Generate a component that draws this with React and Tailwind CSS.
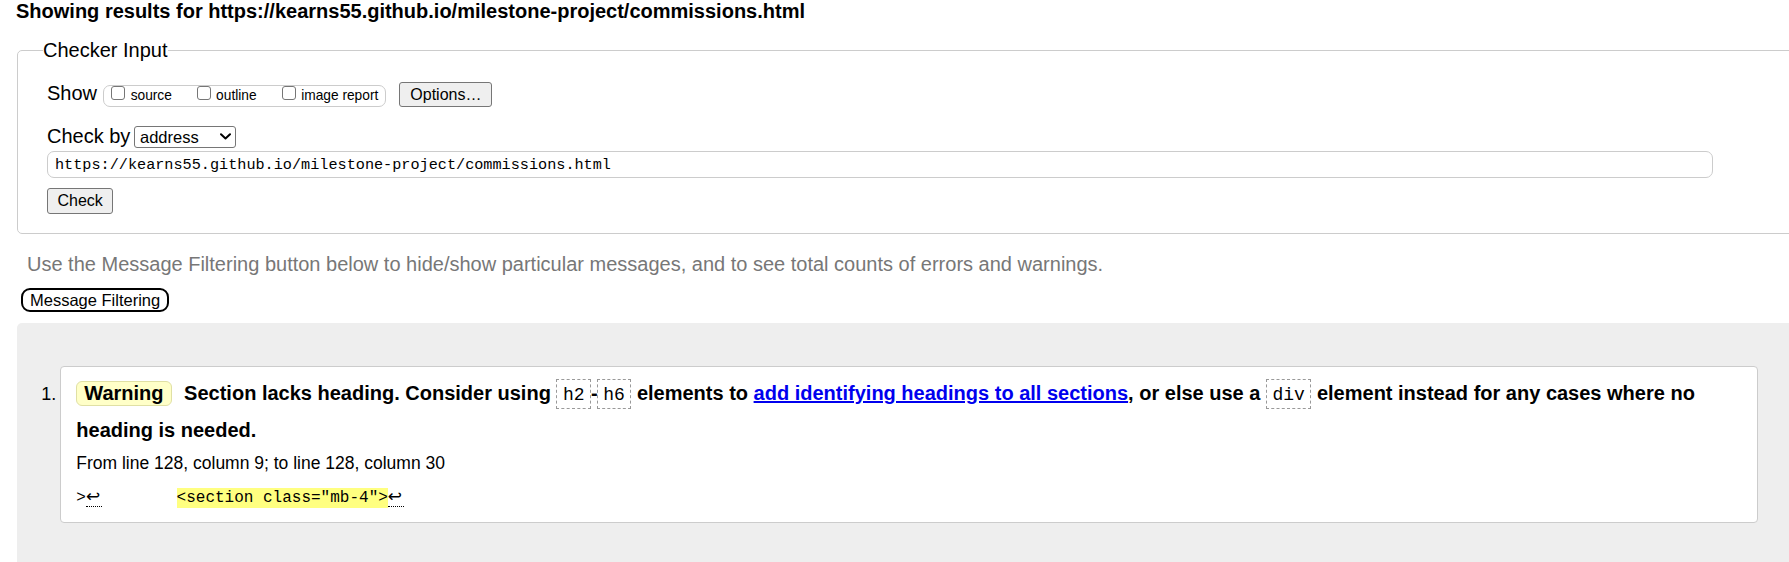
export default function App() {
  return (
    <div className="h-[562px] w-full overflow-hidden bg-white pl-4 text-black font-['Liberation_Sans',Arial,sans-serif]">
      <h2 className="text-[20px] font-bold leading-[23px]">
        Showing results for https://kearns55.github.io/milestone-project/commissions.html
      </h2>

      <fieldset className="ml-px mr-[-60px] mt-[16px] rounded-[5px] border border-[#cccccc] pb-[19px] pl-[29px]">
        <legend className="-ml-[4px] text-[20px] leading-[23px]">Checker Input</legend>

        <div className="mt-[20.3px] flex items-baseline">
          <span className="text-[20px] leading-[23px]">Show</span>
          <div className="ml-[5.6px] flex items-baseline rounded-[7px] border border-[#cccccc] pl-[7.5px] pr-[7px] text-[13.75px] leading-[20px]">
            <span className="h-[14px] w-[14px] rounded-[3px] border border-[#767676] bg-white" />
            <span className="ml-[5.5px] mr-[24.7px]">source</span>
            <span className="h-[14px] w-[14px] rounded-[3px] border border-[#767676] bg-white" />
            <span className="ml-[5.5px] mr-[25px]">outline</span>
            <span className="h-[14px] w-[14px] rounded-[3px] border border-[#767676] bg-white" />
            <span className="ml-[5.5px]">image report</span>
          </div>
          <button className="ml-[13px] rounded-[3px] border border-[#767676] bg-[#efefef] px-[10px] py-[2px] text-[16px] leading-[19px]">
            Options…
          </button>
        </div>

        <div className="mt-[17.3px] flex items-baseline">
          <span className="text-[20px] leading-[23px]">Check by</span>
          <div className="ml-[4px] flex h-[22px] w-[102px] justify-between rounded-[3px] border border-[#767676] bg-white pl-[4.6px] pr-[4px] text-[16.5px] leading-[20px]">
            <span>address</span>
            <svg className="self-center" width="11" height="7" viewBox="0 0 11 7" fill="none">
              <path d="M1 1.2l4.5 4.3 4.5-4.3" stroke="#000" strokeWidth="2" strokeLinecap="round" strokeLinejoin="round" />
            </svg>
          </div>
        </div>

        <div className="mt-[3.2px] h-[27px] w-[1666px] rounded-[7px] border border-[#cccccc] bg-white pl-[7px] pt-[1px] font-['Liberation_Mono',monospace] text-[15.2px] leading-[24px]">
          https://kearns55.github.io/milestone-project/commissions.html
        </div>

        <button className="mt-[10.5px] block rounded-[3px] border border-[#767676] bg-[#efefef] px-[9.5px] py-[2px] text-[16px] leading-[20px]">
          Check
        </button>
      </fieldset>

      <p className="ml-[11px] mt-[19px] text-[20px] leading-[23px] text-[#777777]">
        Use the Message Filtering button below to hide/show particular messages, and to see total counts of errors and warnings.
      </p>

      <button className="ml-[5.3px] mt-[11.6px] block h-[24px] rounded-[9px] border-2 border-black bg-white px-[6.7px] text-[16.5px] leading-[20px]">
        Message Filtering
      </button>

      <div className="ml-px mr-[-60px] mt-[10.7px] flex items-start rounded-tl-[5px] bg-[#eeeeee] pb-[60px] pl-[24.3px] pr-[91px] pt-[43.7px]">
        <span className="mt-[17.3px] w-[19px] shrink-0 text-[18px] leading-[21px]">1.</span>
        <div className="flex-1 rounded-[4px] border border-[#cccccc] bg-white pb-[14.3px] pl-[15px] pr-[16px] pt-[7.6px]">
          <p className="text-[20px] font-bold leading-[37px]">
            <span className="mr-[7px] inline-block rounded-[6px] border border-[#e0e0a4] bg-[#ffffc8] px-[7px] leading-[23px]">
              Warning
            </span>{" "}
            Section lacks heading. Consider using{" "}
            <code className="inline-block border border-dashed border-[#999999] px-[5.5px] pb-[2px] pt-[4px] font-['Liberation_Mono',monospace] text-[18px] font-normal leading-[22px]">
              h2
            </code>
            <span className="tracking-[-1px]">-</span>
            <code className="inline-block border border-dashed border-[#999999] px-[5.5px] pb-[2px] pt-[4px] font-['Liberation_Mono',monospace] text-[18px] font-normal leading-[22px]">
              h6
            </code>{" "}
            elements to{" "}
            <a href="#" className="text-[#0000ee] underline">
              add identifying headings to all sections
            </a>
            , or else use a{" "}
            <code className="inline-block border border-dashed border-[#999999] px-[5.5px] pb-[2px] pt-[4px] font-['Liberation_Mono',monospace] text-[18px] font-normal leading-[22px]">
              div
            </code>{" "}
            element instead for any cases where no heading is needed.
          </p>
          <p className="mt-[4px] text-[17.5px] leading-[20px]">From line 128, column 9; to line 128, column 30</p>
          <p className="mt-[12.7px] whitespace-pre font-['Liberation_Mono',monospace] text-[16px] leading-[20px]">
            <span>{">"}</span>
            <span className="inline-block w-[15.7px] border-b border-dotted border-black font-['DejaVu_Sans',sans-serif] text-[17px] leading-[20px]">↩</span>
            <span className="inline-block w-[75px]" />
            <span className="inline-block bg-[#ffff80] leading-[20px]">{'<section class="mb-4">'}</span>
            <span className="inline-block w-[15.7px] border-b border-dotted border-black font-['DejaVu_Sans',sans-serif] text-[17px] leading-[20px]">↩</span>
          </p>
        </div>
      </div>
    </div>
  );
}
